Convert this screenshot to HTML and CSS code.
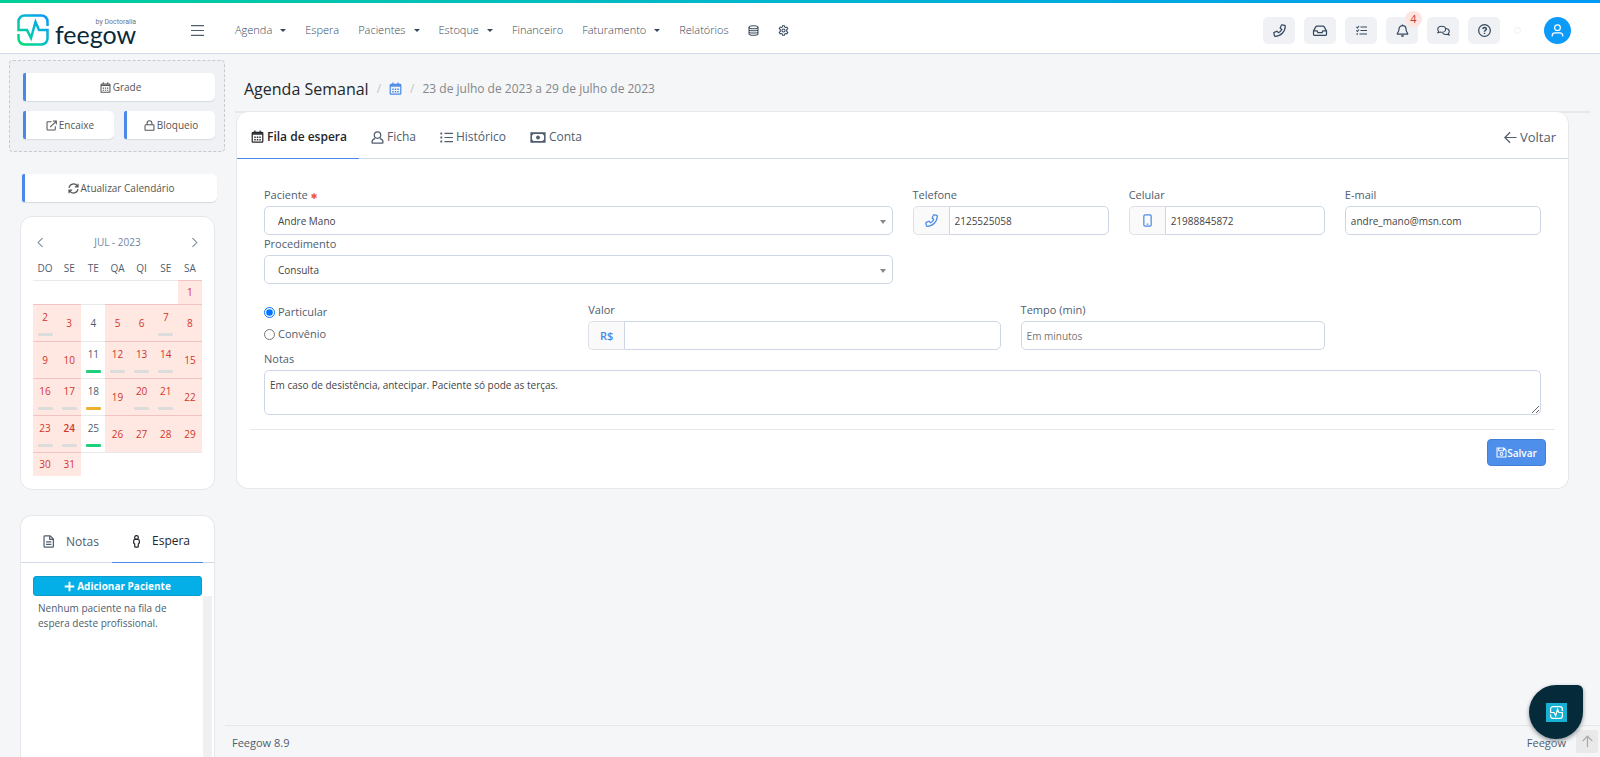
FILE: index.html
```html
<!DOCTYPE html>
<html lang="pt-br">
<head>
    <meta charset="UTF-8">
    <meta name="viewport" content="width=device-width, initial-scale=1.0">
    <title>Agenda Semanal - Feegow</title>
    <link rel="stylesheet" href="styles.css">
</head>
<body>

    <!-- Ícones -->
    <svg class="sprite" aria-hidden="true">
        <defs>
            <linearGradient id="marca" x1="0" y1="1" x2="1" y2="0">
                <stop offset="0" stop-color="#00e070"/>
                <stop offset="0.5" stop-color="#06bcc8"/>
                <stop offset="1" stop-color="#0a96ff"/>
            </linearGradient>
        </defs>
        <symbol id="i-logo" viewBox="0 0 32 32">
            <path d="M30.500 12V7.500a6 6 0 0 0-6-6h-17a6 6 0 0 0-6 6V16h8.500l4 8 4.500-16 3.500 8h8.500v8.500a6 6 0 0 1-6 6h-17a6 6 0 0 1-6-6V20"/>
        </symbol>
        <symbol id="i-calendar" viewBox="0 0 16 16">
            <path d="M2.500 3h11a1 1 0 0 1 1 1v10a1 1 0 0 1-1 1h-11a1 1 0 0 1-1-1V4a1 1 0 0 1 1-1zM4.800 .5v3M11.200 .5v3"/>
            <path d="M1.500 4.800h13" stroke-width="2"/>
            <path d="M4 9h1.800M7.100 9h1.800M10.200 9H12M4 12h1.800M7.100 12h1.800M10.200 12H12" stroke-width="1.800"/>
        </symbol>
        <symbol id="i-external" viewBox="0 0 16 16">
            <path d="M8 2.500H2.500a1 1 0 0 0-1 1v10a1 1 0 0 0 1 1h10a1 1 0 0 0 1-1V9M10 1.500h5v5M15 1.500L6 10.500"/>
        </symbol>
        <symbol id="i-lock" viewBox="0 0 16 16">
            <path d="M2.500 7h11a1 1 0 0 1 1 1v6a1 1 0 0 1-1 1h-11a1 1 0 0 1-1-1V8a1 1 0 0 1 1-1zM4.500 7V4.500a3.500 3.500 0 0 1 7 0V7"/>
        </symbol>
        <symbol id="i-refresh" viewBox="0 0 16 16">
            <path d="M1.500 7a6.500 6.500 0 0 1 12-2.500M14.500 1v4.500H10M14.500 9a6.500 6.500 0 0 1-12 2.500M1.500 15v-4.500H6" stroke-width="1.800"/>
        </symbol>
        <symbol id="i-user" viewBox="0 0 16 16">
            <circle cx="8" cy="5" r="4"/>
            <path d="M5 9.500c-2.500.5-3.800 2-3.800 4.500a1 1 0 0 0 1 1h11.600a1 1 0 0 0 1-1c0-2.500-1.300-4-3.800-4.500"/>
        </symbol>
        <symbol id="i-avatar" viewBox="0 0 16 16">
            <circle cx="8" cy="4.500" r="3.500"/>
            <path d="M1.500 15.500v-1a3.500 3.500 0 0 1 3.500-3.500h6a3.500 3.500 0 0 1 3.500 3.500v1"/>
        </symbol>
        <symbol id="i-list" viewBox="0 0 16 16">
            <path d="M5.500 3H16M5.500 8H16M5.500 13H16"/>
            <path d="M.5 3h2.200M.5 8h2.200M.5 13h2.200" stroke-width="2.400"/>
        </symbol>
        <symbol id="i-money" viewBox="0 0 20 16">
            <path d="M1.500 2.500h17v11h-17z" stroke-width="2"/>
            <path d="M2 3h3l-3 3zM18 3v3l-3-3zM2 13v-3l3 3zM18 13h-3l3-3z" fill="currentColor" stroke="none"/>
            <circle cx="10" cy="8" r="2.400" fill="currentColor" stroke="none"/>
        </symbol>
        <symbol id="i-back" viewBox="0 0 16 16">
            <path d="M15.500 8H1M7.500 1.500L1 8l6.500 6.500"/>
        </symbol>
        <symbol id="i-up" viewBox="0 0 16 16">
            <path d="M8 15V1.500M2 7.500l6-6 6 6"/>
        </symbol>
        <symbol id="i-left" viewBox="0 0 16 16"><path d="M11 1.500L4.500 8l6.500 6.500"/></symbol>
        <symbol id="i-right" viewBox="0 0 16 16"><path d="M5 1.500L11.500 8 5 14.500"/></symbol>
        <symbol id="i-menu" viewBox="0 0 16 16"><path d="M0 2h16M0 8h16M0 14h16"/></symbol>
        <symbol id="i-phone" viewBox="0 0 16 16">
            <path d="M11.200 1l3.300.8a.8.800 0 0 1 .6.800A12.500 12.500 0 0 1 2.600 15.100a.8.800 0 0 1-.8-.6L1 11.200a.8.800 0 0 1 .5-.9L5 8.800l1.700 2A10.500 10.500 0 0 0 10.800 6.700l-2-1.700 1.500-3.500a.8.800 0 0 1 .9-.5z"/>
        </symbol>
        <symbol id="i-mobile" viewBox="0 0 16 16">
            <rect x="3.500" y="1" width="9" height="14" rx="1.500"/>
            <path d="M7 12.500h2"/>
        </symbol>
        <symbol id="i-inbox" viewBox="0 0 18 16">
            <path d="M1 8.500l2.800-5a1.500 1.500 0 0 1 1.300-.8h7.800a1.500 1.500 0 0 1 1.300.8l2.800 5v4a1.500 1.500 0 0 1-1.500 1.500h-13A1.500 1.500 0 0 1 1 12.500zM1.500 8.500h4l1 2.200h5l1-2.200h4"/>
        </symbol>
        <symbol id="i-tasks" viewBox="0 0 16 16">
            <path d="M6.500 3H16M6.500 8H16M5 13h11M.5 2.800L2 4.300 4.500 1.500M.5 7.800L2 9.300l2.500-2.800"/>
            <path d="M.8 13h2" stroke-width="2"/>
        </symbol>
        <symbol id="i-bell" viewBox="0 0 16 16">
            <path d="M8 .5v1.500M8 2a4.300 4.300 0 0 0-4.300 4.300c0 3-1 4-2 5.200-.3.500 0 1 .5 1h11.600c.5 0 .8-.5.500-1-1-1.200-2-2.200-2-5.200A4.300 4.300 0 0 0 8 2z"/>
            <path d="M6.500 14.700h3" stroke-width="2"/>
        </symbol>
        <symbol id="i-chat" viewBox="0 0 18 16">
            <path d="M6.500 2c3.100 0 5.500 1.900 5.500 4.200s-2.400 4.300-5.500 4.300c-.8 0-1.500-.1-2.200-.3-.9.600-2 1-3.300 1 .7-.8 1.200-1.500 1.400-2.200A3.900 3.900 0 0 1 1 6.200C1 3.900 3.400 2 6.500 2z"/>
            <path d="M12.500 5.200c2.600.3 4.500 2 4.500 4.200 0 1-.5 2-1.300 2.700.2.700.6 1.400 1.300 2.100-1.200 0-2.300-.4-3.200-1-2.600.6-5-.2-6.200-2"/>
        </symbol>
        <symbol id="i-help" viewBox="0 0 16 16">
            <circle cx="8" cy="8" r="7.200"/>
            <path d="M5.900 6.200c.2-1.200 1-1.900 2.200-1.900 1.300 0 2.200.8 2.200 1.900 0 1.700-2.300 1.600-2.300 3.200M8 10.900v1.500" stroke-width="1.800"/>
        </symbol>
        <symbol id="i-db" viewBox="0 0 16 16">
            <ellipse cx="8" cy="3.200" rx="6.500" ry="2.200"/>
            <path d="M1.500 3.200v9.600c0 1.200 2.900 2.200 6.500 2.200s6.500-1 6.500-2.200V3.200M1.500 6.500c0 1.200 2.900 2 6.500 2s6.500-.8 6.500-2M1.500 9.700c0 1.200 2.900 2 6.500 2s6.500-.8 6.500-2"/>
        </symbol>
        <symbol id="i-gear" viewBox="0 0 16 16">
            <path d="M6.700 1h2.600l.4 1.900 1.300.8 1.900-.6 1.300 2.300L12.700 6.700v2.600l1.500 1.300-1.300 2.300-1.900-.6-1.300.8-.4 1.900H6.700l-.4-1.900-1.300-.8-1.900.6-1.300-2.300 1.500-1.300V6.700L1.800 5.400l1.300-2.300 1.900.6 1.300-.8z"/>
            <circle cx="8" cy="8" r="2.300"/>
        </symbol>
        <symbol id="i-file" viewBox="0 0 16 16">
            <path d="M3.500 1H10l4 4v9a1 1 0 0 1-1 1H3.500a1 1 0 0 1-1-1V2a1 1 0 0 1 1-1zM9.500 1v4.500H14M5 8.500h6.500M5 11.500h6.500"/>
        </symbol>
        <symbol id="i-person" viewBox="0 0 16 16">
            <circle cx="8" cy="3" r="2.300"/>
            <path d="M6 5.300h4c1 .2 1.500 1 1.500 2v2.500L10.200 11v3a1 1 0 0 1-1 1H6.800a1 1 0 0 1-1-1v-3L4.500 9.800V7.300c0-1 .5-1.800 1.500-2z"/>
        </symbol>
        <symbol id="i-plus" viewBox="0 0 16 16"><path d="M8 1v14M1 8h14" stroke-width="2.800"/></symbol>
        <symbol id="i-save" viewBox="0 0 16 16">
            <path d="M1.500 1.500h10l3 3v10h-13zM4 1.500v4h7v-4"/>
            <circle cx="8" cy="10" r="2"/>
        </symbol>
    </svg>

    <header class="topo">
        <a href="#" class="logo">
            <svg class="logo-marca"><use href="#i-logo"/></svg>
            <span class="logo-texto">
                <small>by Doctoralia</small>
                <span class="logo-nome">feegow</span>
            </span>
        </a>
        <button type="button" class="menu" aria-label="Menu"><svg class="icone"><use href="#i-menu"/></svg></button>
        <nav>
            <a href="#" class="caret">Agenda</a>
            <a href="#">Espera</a>
            <a href="#" class="caret">Pacientes</a>
            <a href="#" class="caret">Estoque</a>
            <a href="#">Financeiro</a>
            <a href="#" class="caret">Faturamento</a>
            <a href="#">Relatórios</a>
            <a href="#" aria-label="Cadastros"><svg class="icone pequeno"><use href="#i-db"/></svg></a>
            <a href="#" aria-label="Configurações"><svg class="icone pequeno"><use href="#i-gear"/></svg></a>
        </nav>
        <div class="acoes">
            <button type="button" aria-label="Ligações"><svg class="icone"><use href="#i-phone"/></svg></button>
            <button type="button" aria-label="Caixa de entrada"><svg class="icone largo"><use href="#i-inbox"/></svg></button>
            <button type="button" aria-label="Tarefas"><svg class="icone pequeno"><use href="#i-tasks"/></svg></button>
            <button type="button" aria-label="Notificações"><svg class="icone"><use href="#i-bell"/></svg><span class="badge">4</span></button>
            <button type="button" aria-label="Chat"><svg class="icone"><use href="#i-chat"/></svg></button>
            <button type="button" aria-label="Ajuda"><svg class="icone"><use href="#i-help"/></svg></button>
            <span class="status"></span>
            <a href="#" class="avatar" aria-label="Perfil"><svg class="icone"><use href="#i-avatar"/></svg></a>
        </div>
    </header>

    <div class="pagina">
        <aside>
            <div class="atalhos">
                <button type="button" class="atalho inteiro"><svg class="icone pequeno"><use href="#i-calendar"/></svg>Grade</button>
                <button type="button" class="atalho"><svg class="icone pequeno"><use href="#i-external"/></svg>Encaixe</button>
                <button type="button" class="atalho"><svg class="icone pequeno"><use href="#i-lock"/></svg>Bloqueio</button>
            </div>
            <button type="button" class="atalho atualizar"><svg class="icone pequeno"><use href="#i-refresh"/></svg>Atualizar Calendário</button>

            <section class="cartao calendario">
                <div class="mes">
                    <button type="button" aria-label="Mês anterior"><svg class="icone pequeno"><use href="#i-left"/></svg></button>
                    <span>JUL - 2023</span>
                    <button type="button" aria-label="Próximo mês"><svg class="icone pequeno"><use href="#i-right"/></svg></button>
                </div>
                <table>
                    <thead>
                        <tr><th>DO</th><th>SE</th><th>TE</th><th>QA</th><th>QI</th><th>SE</th><th>SA</th></tr>
                    </thead>
                    <tbody>
                        <tr class="curta"><td></td><td></td><td></td><td></td><td></td><td></td><td class="off">1</td></tr>
                        <tr><td class="off">2<i></i></td><td class="off">3</td><td>4</td><td class="off">5</td><td class="off">6</td><td class="off">7<i></i></td><td class="off">8</td></tr>
                        <tr><td class="off">9</td><td class="off">10</td><td>11<i class="verde"></i></td><td class="off">12<i></i></td><td class="off">13<i></i></td><td class="off">14<i></i></td><td class="off">15</td></tr>
                        <tr><td class="off">16<i></i></td><td class="off">17<i></i></td><td>18<i class="amarelo"></i></td><td class="off">19</td><td class="off">20<i></i></td><td class="off">21<i></i></td><td class="off">22</td></tr>
                        <tr><td class="off">23<i></i></td><td class="off hoje">24<i></i></td><td>25<i class="verde"></i></td><td class="off">26</td><td class="off">27</td><td class="off">28</td><td class="off">29</td></tr>
                        <tr class="curta"><td class="off">30</td><td class="off">31</td><td></td><td></td><td></td><td></td><td></td></tr>
                    </tbody>
                </table>
            </section>

            <section class="cartao espera">
                <div class="espera-abas">
                    <a href="#"><svg class="icone"><use href="#i-file"/></svg>Notas</a>
                    <a href="#" class="ativa"><svg class="icone"><use href="#i-person"/></svg>Espera</a>
                </div>
                <button type="button" class="adicionar"><svg class="icone pequeno"><use href="#i-plus"/></svg>Adicionar Paciente</button>
                <div class="fila">
                    <p>Nenhum paciente na fila de espera deste profissional.</p>
                    <div class="trilho"></div>
                </div>
            </section>
        </aside>

        <div class="conteudo">
            <main>
                <div class="titulo">
                    <h1>Agenda Semanal</h1>
                    <span class="barra">/</span>
                    <a href="#" aria-label="Agenda"><svg class="icone"><use href="#i-calendar"/></svg></a>
                    <span class="barra">/</span>
                    <span class="periodo">23 de julho de 2023 a 29 de julho de 2023</span>
                </div>

                <section class="cartao painel">
                    <div class="abas">
                        <a href="#" class="ativa"><svg class="icone"><use href="#i-calendar"/></svg>Fila de espera</a>
                        <a href="#"><svg class="icone"><use href="#i-user"/></svg>Ficha</a>
                        <a href="#"><svg class="icone"><use href="#i-list"/></svg>Histórico</a>
                        <a href="#"><svg class="icone largo"><use href="#i-money"/></svg>Conta</a>
                        <a href="#" class="voltar"><svg class="icone"><use href="#i-back"/></svg>Voltar</a>
                    </div>

                    <form>
                        <div class="campo c6">
                            <label for="paciente">Paciente <b class="obrigatorio">✱</b></label>
                            <div class="selecao">
                                <select id="paciente"><option>Andre Mano</option></select>
                            </div>
                        </div>
                        <div class="campo c2">
                            <label for="telefone">Telefone</label>
                            <div class="grupo">
                                <span class="prefixo"><svg class="icone"><use href="#i-phone"/></svg></span>
                                <input type="text" id="telefone" value="2125525058">
                            </div>
                        </div>
                        <div class="campo c2">
                            <label for="celular">Celular</label>
                            <div class="grupo">
                                <span class="prefixo"><svg class="icone"><use href="#i-mobile"/></svg></span>
                                <input type="text" id="celular" value="21988845872">
                            </div>
                        </div>
                        <div class="campo c2">
                            <label for="email">E-mail</label>
                            <input type="text" id="email" value="andre_mano@msn.com">
                        </div>
                        <div class="campo linha">
                            <label for="procedimento">Procedimento</label>
                            <div class="selecao">
                                <select id="procedimento"><option>Consulta</option></select>
                            </div>
                        </div>
                        <div class="campo c3 tipo">
                            <label><input type="radio" name="tipo" checked>Particular</label>
                            <label><input type="radio" name="tipo">Convênio</label>
                        </div>
                        <div class="campo c4 folga">
                            <label for="valor">Valor</label>
                            <div class="grupo">
                                <span class="prefixo">R$</span>
                                <input type="text" id="valor">
                            </div>
                        </div>
                        <div class="campo c3 folga">
                            <label for="tempo">Tempo (min)</label>
                            <input type="text" id="tempo" placeholder="Em minutos">
                        </div>
                        <div class="campo c12">
                            <label for="notas">Notas</label>
                            <textarea id="notas">Em caso de desistência, antecipar. Paciente só pode as terças.</textarea>
                        </div>
                    </form>
                    <div class="rodape-form">
                        <button type="button" class="salvar"><svg class="icone pequeno"><use href="#i-save"/></svg>Salvar</button>
                    </div>
                </section>
            </main>

            <footer>
                <span>Feegow 8.9</span>
                <span>Feegow</span>
            </footer>
        </div>
    </div>

    <a href="#" class="subir" aria-label="Voltar ao topo"><svg class="icone"><use href="#i-up"/></svg></a>
    <button type="button" class="ajuda" aria-label="Atendimento"><span><svg class="icone"><use href="#i-logo"/></svg></span></button>

</body>
</html>
```
FILE: styles.css
```css
* {
    box-sizing: border-box;
}

body {
    margin: 0;
    min-height: 100vh;
    display: flex;
    flex-direction: column;
    font-family: "Open Sans", "Noto Sans", sans-serif;
    font-size: 11px;
    line-height: 16px;
    color: #4f5d6e;
    background-color: #f5f6f8;
}

a {
    color: inherit;
    text-decoration: none;
}

button, input, select, textarea {
    font: inherit;
    color: inherit;
}

button {
    cursor: pointer;
    border: 0;
    padding: 0;
    background: none;
}

.sprite {
    position: absolute;
    width: 0;
    height: 0;
}

.icone {
    width: 13px;
    height: 13px;
    flex: none;
    fill: none;
    stroke: currentColor;
    stroke-width: 1.5;
}

.icone.pequeno {
    width: 11px;
    height: 11px;
}

.icone.largo {
    width: 16px;
}

/* Topo */
.topo {
    display: flex;
    align-items: center;
    height: 54px;
    padding: 7px 29px 0 17px;
    background: linear-gradient(90deg, #00cf98, #00b5d0 50%, #0099f5) top / 100% 3px no-repeat #fff;
    border-bottom: 1px solid #d3d9e9;
}

.logo {
    display: flex;
    align-items: center;
    width: 174px;
    gap: 6px;
}

.logo-marca {
    width: 32px;
    height: 32px;
    fill: none;
    stroke: url(#marca);
    stroke-width: 2.5;
}

.logo-texto {
    display: flex;
    flex-direction: column;
}

.logo-texto small {
    align-self: flex-end;
    font-family: Roboto, sans-serif;
    font-size: 7px;
    line-height: 8px;
    color: #6d7788;
}

.logo-nome {
    font-family: Lato, sans-serif;
    font-size: 25px;
    line-height: 17px;
    color: #0a2a3a;
}

.menu {
    display: flex;
    width: 44px;
}

nav {
    display: flex;
    align-items: center;
    gap: 19px;
    color: #37475a;
}

nav a {
    display: flex;
    align-items: center;
    font-weight: 300;
}

.caret::after {
    content: "";
    margin-left: 8px;
    border: 3px solid transparent;
    border-top-color: currentColor;
    border-bottom: 0;
}

.acoes {
    display: flex;
    align-items: center;
    gap: 9px;
    margin-left: auto;
    color: #34495e;
}

.acoes button {
    position: relative;
    display: flex;
    align-items: center;
    justify-content: center;
    width: 32px;
    height: 27px;
    border-radius: 5px;
    background: #eff1f5;
}

.badge {
    position: absolute;
    top: -6px;
    right: -4px;
    width: 17px;
    border-radius: 8px;
    background: #ffe5df;
    color: #c43a33;
}

.status {
    width: 7px;
    height: 7px;
    margin: 0 14px 0 5px;
    border: 1px solid #eceef0;
    border-radius: 50%;
}

.avatar {
    display: flex;
    align-items: center;
    justify-content: center;
    width: 27px;
    height: 27px;
    border-radius: 50%;
    background: #0c9bf8;
    color: #fff;
}

/* Estrutura */
.pagina {
    display: flex;
    flex: 1;
}

aside {
    display: flex;
    flex-direction: column;
    width: 225px;
    padding: 6px 0 0 9px;
}

.conteudo {
    display: flex;
    flex-direction: column;
    flex: 1;
}

.cartao {
    background: #fff;
    border: 1px solid #e6e7ea;
    border-radius: 12px;
}

/* Lateral */
.atalhos {
    display: grid;
    grid-template-columns: 1fr 1fr;
    gap: 10px;
    padding: 12px 9px 12px 13px;
    border: 1px dashed #c8cacd;
    border-radius: 4px;
    background: #eff1f5;
}

.atalho {
    display: flex;
    align-items: center;
    justify-content: center;
    gap: 2px;
    height: 28px;
    font-size: 10px;
    color: #555;
    background: #fff;
    border-left: 3px solid #4a89e8;
    border-radius: 2px 5px 5px 2px;
    box-shadow: 0 1px 1px #d8dade;
}

.inteiro {
    grid-column: 1 / -1;
}

.atualizar {
    margin: 22px 8px 14px 13px;
}

.calendario {
    margin: 0 10px 25px 11px;
    padding: 17px 12px 13px;
}

.mes {
    display: flex;
    justify-content: space-between;
    align-items: center;
    height: 16px;
    padding: 0 2px;
    font-size: 10px;
    color: #7185a0;
}

.mes button {
    display: flex;
}

.calendario table {
    width: 100%;
    table-layout: fixed;
    border-collapse: collapse;
    text-align: center;
    font-size: 10px;
    line-height: 14px;
}

.calendario th {
    height: 30px;
    padding: 6px 0 0;
    font-weight: 400;
}

.calendario td {
    height: 37px;
    padding: 0;
    border-top: 1px solid #e9eaec;
}

.calendario .curta td {
    height: 24px;
}

.calendario .off {
    color: #d2352d;
    background: #ffe8e2;
    border-top-color: #f3c3c2;
}

.calendario .hoje {
    font-weight: 600;
}

.calendario i {
    display: block;
    width: 15px;
    height: 3px;
    margin: 9px auto 0;
    border-radius: 1px;
    background: #dcdcdc;
}

.calendario .verde {
    background: #1fd07a;
}

.calendario .amarelo {
    background: #edb030;
}

.espera {
    display: flex;
    flex-direction: column;
    flex: 1;
    margin: 0 10px 0 11px;
    border-bottom: 0;
    border-radius: 12px 12px 0 0;
}

.espera-abas {
    display: flex;
    height: 47px;
    margin-bottom: 13px;
    border-bottom: 1px solid #d3d9e9;
    font-size: 12px;
}

.espera-abas a {
    display: flex;
    align-items: center;
    gap: 11px;
    width: 91px;
    height: 47px;
    padding: 4px 0 0 21px;
}

.espera-abas a + a {
    gap: 9px;
    padding-left: 18px;
}

.espera-abas .ativa {
    color: #23262b;
    border-bottom: 1px solid #4a89e8;
}

.adicionar {
    display: flex;
    align-items: center;
    justify-content: center;
    gap: 2px;
    height: 20px;
    margin: 0 12px;
    font-size: 10px;
    font-weight: 700;
    color: #fff;
    background: #04aee6;
    border: 1px solid #0b9cc9;
    border-radius: 3px;
}

.fila {
    display: flex;
    flex: 1;
    justify-content: space-between;
    padding-right: 2px;
    font-size: 10px;
    line-height: 15px;
}

.fila p {
    width: 150px;
    margin: 5px 0 0 17px;
}

.trilho {
    width: 9px;
    background: #f0f0f0;
}

/* Conteúdo */
main {
    flex: 1;
    padding: 0 10px;
}

.titulo {
    display: flex;
    align-items: center;
    gap: 8px;
    height: 59px;
    padding: 12px 0 0 9px;
    border-bottom: 2px solid #e6e7ea;
    font-size: 12px;
    color: #848688;
}

.titulo h1 {
    margin: 0;
    font-size: 16px;
    font-weight: 500;
    color: #24272c;
}

.titulo a {
    display: flex;
    color: #4a89e8;
}

.barra {
    color: #c4c6c9;
}

.painel {
    margin: -1px 21px 20px 1px;
    border-top: 0;
}

.abas {
    display: flex;
    height: 47px;
    border-bottom: 1px solid #d3d9e9;
    font-size: 12px;
}

.abas a {
    display: flex;
    align-items: center;
    gap: 3px;
    height: 47px;
    padding: 3px 12px 0;
}

.abas .ativa {
    padding-left: 14px;
    font-weight: 600;
    color: #23262b;
    border-bottom: 1px solid #4a89e8;
}

.abas .voltar {
    margin-left: auto;
    font-size: 13px;
}

form {
    display: grid;
    grid-template-columns: repeat(12, 1fr);
    column-gap: 20px;
    padding: 27px 27px 14px;
}

.campo > label {
    display: block;
    height: 20px;
    line-height: 18px;
}

.c2 {
    grid-column: span 2;
}

.c3 {
    grid-column: span 3;
}

.c4 {
    grid-column: span 4;
}

.c6 {
    grid-column: span 6;
}

.c12 {
    grid-column: span 12;
}

/* campo de meia largura que fica sozinho na linha */
.linha {
    grid-column: 1 / 7;
}

.c3.tipo {
    grid-column: 1 / 4;
    padding-top: 17px;
}

.obrigatorio {
    font-family: "DejaVu Sans", sans-serif;
    font-size: 8px;
    color: #f4543c;
}

input[type="text"], select, textarea {
    display: block;
    width: 100%;
    height: 29px;
    padding: 0 5px;
    font-size: 10px;
    color: #444;
    background: #fff;
    border: 1px solid #ced6e6;
    border-radius: 5px;
}

.selecao {
    position: relative;
}

.selecao::after {
    content: "";
    position: absolute;
    right: 7px;
    top: 14px;
    border: 3px solid transparent;
    border-top: 4px solid #888;
    border-bottom: 0;
}

select {
    appearance: none;
    padding: 0 13px;
}

.grupo {
    display: flex;
}

.grupo input[type="text"] {
    flex: 1;
    min-width: 0;
    border-radius: 0 5px 5px 0;
}

.prefixo {
    display: flex;
    align-items: center;
    justify-content: center;
    width: 36px;
    font-weight: 600;
    color: #4a89e8;
    background: #fafafa;
    border: 1px solid #dde0e6;
    border-right: 0;
    border-radius: 5px 0 0 5px;
}

.folga {
    padding-top: 17px;
}

.tipo label {
    display: flex;
    align-items: center;
    gap: 3px;
    height: 22px;
}

.tipo input {
    width: 11px;
    height: 11px;
    margin: 0;
}

textarea {
    height: 45px;
    padding: 6px 5px;
    line-height: 16px;
    resize: vertical;
}

::placeholder {
    color: #777;
}

.rodape-form {
    display: flex;
    justify-content: flex-end;
    margin: 0 13px;
    padding: 9px 9px 22px;
    border-top: 1px solid #e6e7ea;
}

.salvar {
    display: flex;
    align-items: center;
    justify-content: center;
    width: 59px;
    height: 27px;
    font-size: 10px;
    font-weight: 600;
    color: #fff;
    background: #4f8fec;
    border: 1px solid #4280d8;
    border-radius: 4px;
}

footer {
    display: flex;
    justify-content: space-between;
    padding: 9px 34px 6px 7px;
    border-top: 1px solid #e6e7ea;
    font-size: 11px;
}

/* Botões flutuantes */
.subir {
    position: fixed;
    right: 2px;
    bottom: 4px;
    display: flex;
    align-items: center;
    justify-content: center;
    width: 22px;
    height: 23px;
    border-radius: 2px;
    background: #e9e9ea;
    color: #aaa;
}

.ajuda {
    position: fixed;
    right: 17px;
    bottom: 18px;
    display: flex;
    align-items: center;
    justify-content: center;
    width: 54px;
    height: 54px;
    border-radius: 50% 10% 50% 50%;
    background: #052b3a;
    box-shadow: 0 2px 4px #8a9298;
    color: #fff;
}

.ajuda span {
    display: flex;
    padding: 3px 4px;
    background: #17b1d3;
}

.ajuda .icone {
    stroke-width: 3;
}
```
